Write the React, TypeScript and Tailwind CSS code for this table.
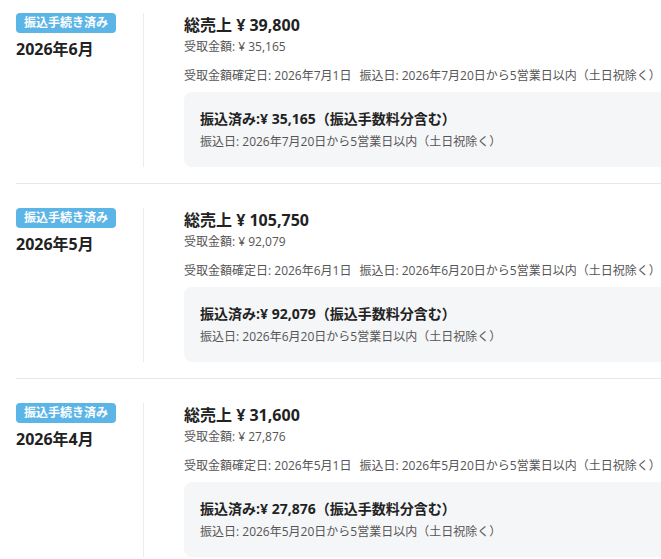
import React from "react";

type Payout = {
    month: string;
    gross: string;
    received: string;
    fixedDate: string;
    transferDate: string;
};

const payouts: Payout[] = [
    { month: "2026年6月", gross: "39,800", received: "35,165", fixedDate: "2026年7月1日", transferDate: "2026年7月20日" },
    { month: "2026年5月", gross: "105,750", received: "92,079", fixedDate: "2026年6月1日", transferDate: "2026年6月20日" },
    { month: "2026年4月", gross: "31,600", received: "27,876", fixedDate: "2026年5月1日", transferDate: "2026年5月20日" },
];

const PayoutRow: React.FC<{ item: Payout }> = ({ item }) => (
    <div className="pt-6 pb-4 border-b border-[#e6e7ea]">
        <div className="flex">
            <div className="flex w-[128px] shrink-0 flex-col items-start border-r border-[#ececee]">
                <span className="block rounded-[4px] bg-[#5bb5e6] px-2 py-0.5 text-xs leading-4 font-bold text-white">
                    振込手続き済み
                </span>
                <p className="mt-1 text-base leading-6 font-bold text-[#222]">{item.month}</p>
            </div>
            <div className="flex-1 pl-10">
                <p className="text-base leading-6 font-bold text-[#222]">総売上 ¥ {item.gross}</p>
                <p className="mt-0.5 text-xs leading-4 text-[#555]">受取金額: ¥ {item.received}</p>
                <div className="mt-[13px] flex gap-2 text-xs leading-4 text-[#555]">
                    <span>受取金額確定日: {item.fixedDate}</span>
                    <span>振込日: {item.transferDate}から5営業日以内（土日祝除く）</span>
                </div>
                <div className="mt-2 rounded-lg bg-[#f5f6f8] px-4 pt-[17px] pb-[16px]">
                    <p className="text-sm leading-5 font-bold text-[#222]">
                        振込済み:¥ {item.received}（振込手数料分含む）
                    </p>
                    <p className="mt-1 text-xs leading-[18px] text-[#555]">
                        振込日: {item.transferDate}から5営業日以内（土日祝除く）
                    </p>
                </div>
            </div>
        </div>
    </div>
);

export default function App() {
    return (
        <div
            className="h-[559px] w-full overflow-hidden bg-white"
            style={{ fontFamily: '"Open Sans", "Noto Sans CJK JP", sans-serif' }}
        >
            <div className="-mt-[11px] w-[720px] pl-4">
                {payouts.map((p) => (
                    <PayoutRow key={p.month} item={p} />
                ))}
            </div>
        </div>
    );
}
